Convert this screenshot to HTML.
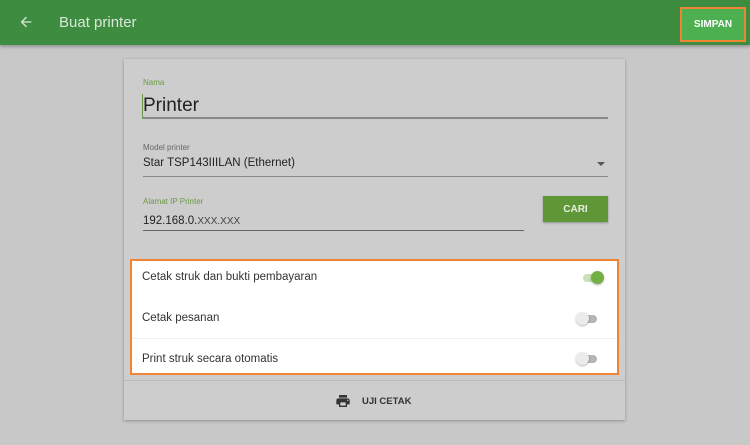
<!DOCTYPE html>
<html><head><meta charset="utf-8"><style>
*{box-sizing:border-box;margin:0;padding:0}
body{width:750px;height:445px;background:#c8c8c8;font-family:"Liberation Sans",sans-serif;position:relative;overflow:hidden}
.bar{position:absolute;left:0;top:0;width:750px;height:45px;background:#3d8c40;box-shadow:0 2px 3px rgba(0,0,0,.25)}
.bar .t{position:absolute;left:59px;top:14px;color:#d8e8d8;font-size:15px}
.bar svg{position:absolute;left:18px;top:14px}
.simpan{position:absolute;left:680px;top:7px;width:66px;height:35px;border:2px solid #ef8434;background:#4caf50;color:#fff;font-size:10px;font-weight:bold;display:flex;align-items:center;justify-content:center}
.card{position:absolute;left:124px;top:59px;width:501px;height:361px;background:#cdcdcd;box-shadow:0 1px 3px rgba(0,0,0,.3)}
.lbl{position:absolute;font-size:8px;color:#6a9a45}
.lbl.g{color:#666}
.val{position:absolute;color:#222}
.line{position:absolute;height:1px;background:#777}
.cari{position:absolute;left:419px;top:137px;width:65px;height:26px;background:#5f9636;color:#e6efe0;font-size:10px;font-weight:bold;display:flex;align-items:center;justify-content:center;box-shadow:0 1px 2px rgba(0,0,0,.3)}
.box{position:absolute;left:130px;top:259px;width:489px;height:116px;background:#fff;border:2px solid #ef8434}
.row{position:absolute;left:10px;font-size:11.5px;color:#333}
.sep{position:absolute;left:0;right:0;top:77px;height:1px;background:#eee}
.tr{position:absolute;width:16px;height:8px;border-radius:4px;background:#b5b5b5}
.th{position:absolute;width:13px;height:13px;border-radius:50%;background:#ebebeb;box-shadow:0 1px 2px rgba(0,0,0,.3)}
.bot{position:absolute;height:1px;background:#bbb}
.uji{position:absolute;font-size:9.5px;font-weight:bold;color:#333}
</style></head><body>
<div class="bar">
<svg width="16" height="16" viewBox="0 0 24 24"><path d="M20 11H7.8l5.6-5.6L12 4l-8 8 8 8 1.4-1.4L7.8 13H20z" fill="#d8e8d8"/></svg>
<div class="t">Buat printer</div>
<div class="simpan">SIMPAN</div>
</div>
<div class="card">
<div class="lbl" style="left:19px;top:19px">Nama</div>
<div style="position:absolute;left:18px;top:35px;width:1px;height:25px;background:#6a9a45"></div>
<div class="val" style="left:19px;top:36px;font-size:19px">Printer</div>
<div class="line" style="left:19px;top:58px;width:465px;height:2px;background:#888"></div>
<div class="lbl g" style="left:19px;top:84px">Model printer</div>
<div class="val" style="left:19px;top:98px;font-size:11.5px">Star TSP143IIILAN (Ethernet)</div>
<div style="position:absolute;left:473px;top:103px;width:0;height:0;border-left:4px solid transparent;border-right:4px solid transparent;border-top:4px solid #555"></div>
<div class="line" style="left:19px;top:117px;width:465px;background:#888"></div>
<div class="lbl" style="left:19px;top:138px">Alamat IP Printer</div>
<div class="val" style="left:19px;top:156px;font-size:11.5px">192.168.0.<span style="font-size:10px;color:#444">XXX.XXX</span></div>
<div class="line" style="left:19px;top:171px;width:381px;background:#666"></div>
<div class="cari">CARI</div>
<div class="bot" style="left:0;top:321px;width:501px"></div>
<svg style="position:absolute;left:211px;top:334px" width="16" height="16" viewBox="0 0 24 24"><path d="M19 8H5c-1.7 0-3 1.3-3 3v6h4v4h12v-4h4v-6c0-1.7-1.3-3-3-3zm-3 11H8v-5h8v5zm3-7c-.6 0-1-.4-1-1s.4-1 1-1 1 .4 1 1-.4 1-1 1zm-1-9H6v4h12V3z" fill="#333"/></svg>
<div class="uji" style="left:238px;top:337px">UJI CETAK</div>
</div>
<div class="box">
<div class="row" style="top:10px">Cetak struk dan bukti pembayaran</div>
<div class="tr" style="left:451px;top:13px;background:#c9e2b8"></div>
<div class="th" style="left:459px;top:10px;background:#72b043"></div>
<div class="row" style="top:51px">Cetak pesanan</div>
<div class="tr" style="left:449px;top:54px"></div>
<div class="th" style="left:444px;top:51px"></div>
<div class="sep"></div>
<div class="row" style="top:92px">Print struk secara otomatis</div>
<div class="tr" style="left:449px;top:94px"></div>
<div class="th" style="left:444px;top:91px"></div>
</div>
</body></html>
